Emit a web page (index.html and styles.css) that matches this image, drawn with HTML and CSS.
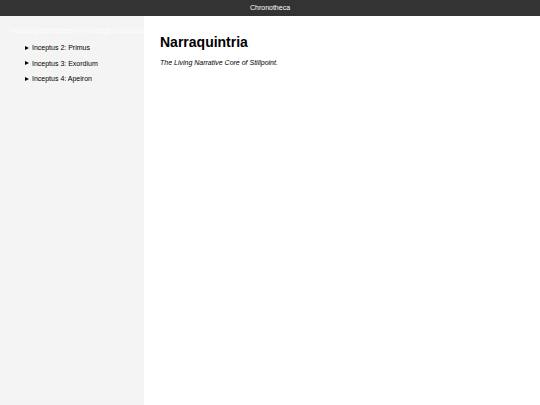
FILE: index.html
```html
<!DOCTYPE html>
<html>
<head>
<meta charset="utf-8">
<link rel="stylesheet" href="styles.css">
</head>
<body>
<header class="topbar">Chronotheca</header>
<div class="layout">
  <aside class="sidebar">
    <div class="hash">74aq2dnpehh6ebdenrkrw1hd0g82v3e41s6q</div>
    <ul class="nav">
      <li><span class="tri"></span>Inceptus 2: Primus</li>
      <li><span class="tri"></span>Inceptus 3: Exordium</li>
      <li><span class="tri"></span>Inceptus 4: Apeiron</li>
    </ul>
  </aside>
  <main class="content">
    <h1 class="title">Narraquintria</h1>
    <p class="subtitle">The Living Narrative Core of Stillpoint.</p>
  </main>
</div>
</body>
</html>
```
FILE: styles.css
```css
html, body {
  margin: 0;
  padding: 0;
  height: 100%;
}
body {
  font-family: "Liberation Sans", Arial, sans-serif;
  background: #ffffff;
  color: #000;
  display: flex;
  flex-direction: column;
}
.topbar {
  height: 16px;
  line-height: 16px;
  background: #333333;
  color: #ffffff;
  font-size: 7px;
  text-align: center;
}
.layout {
  flex: 1;
  display: flex;
}
.sidebar {
  width: 144px;
  background: #f4f4f4;
  overflow: hidden;
  padding-top: 10px;
  box-sizing: border-box;
}
.hash {
  font-size: 7px;
  color: #fdfdfd;
  white-space: nowrap;
  padding-left: 8px;
  line-height: 10px;
}
.nav {
  list-style: none;
  margin: 4px 0 0;
  padding: 0 0 0 25px;
  font-size: 7px;
}
.nav li {
  height: 15.5px;
  line-height: 15.5px;
  display: flex;
  align-items: center;
}
.tri {
  display: inline-block;
  width: 0;
  height: 0;
  border-top: 2.5px solid transparent;
  border-bottom: 2.5px solid transparent;
  border-left: 4.5px solid #000;
  margin-right: 3px;
}
.content {
  flex: 1;
  padding: 0 16px;
}
.title {
  font-size: 14px;
  margin: 18px 0 0;
  line-height: 16px;
}
.subtitle {
  font-size: 7px;
  font-style: italic;
  margin: 9px 0 0;
}
```
